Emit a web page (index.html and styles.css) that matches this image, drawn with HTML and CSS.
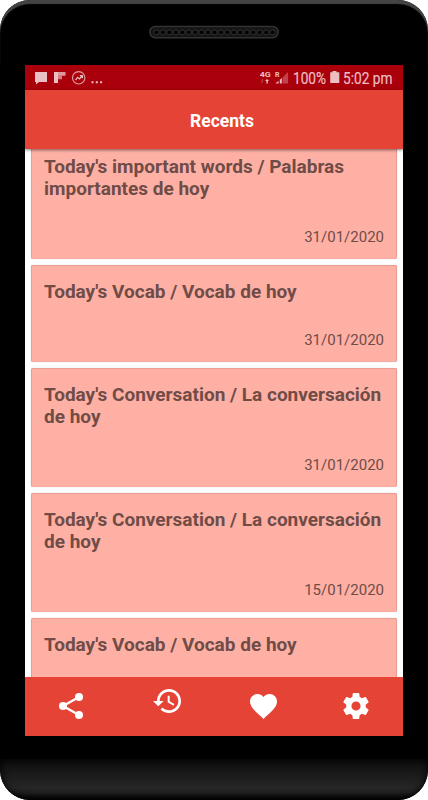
FILE: index.html
```
<!DOCTYPE html>
<html lang="en">
<head>
  <meta charset="UTF-8">
  <title>Recents</title>
  <link rel="stylesheet" href="styles.css">
</head>
<body>
<div class="phone">
  <div class="top">
    <svg class="speaker" width="130" height="14" viewBox="0 0 130 14">
      <defs>
        <pattern id="hole" width="6.45" height="14" patternUnits="userSpaceOnUse" x="4.3">
          <circle cx="3.2" cy="7.4" r="2.6" fill="#020202" stroke="#3c3c3c" stroke-width="0.8"/>
        </pattern>
      </defs>
      <rect x="0.8" y="1.5" width="128.4" height="11.2" rx="5.6" fill="#141414" stroke="#333" stroke-width="1.5"/>
      <rect x="4.3" y="0" width="122.5" height="14" fill="url(#hole)"/>
    </svg>
  </div>

  <div class="screen">
    <div class="status">
      <svg width="80" height="25" viewBox="0 0 80 25" fill="#ecbfc3">
        <path d="M10 7h12v10h-8l-3 2.5V17h-1z"/>
        <path d="M29 7h4v11h-4z"/>
        <path d="M33 7h7.5v3.7H33z" opacity=".8"/>
        <path d="M33 10.7h4v3.6h-4z" opacity=".65"/>
        <circle cx="53.7" cy="12.8" r="6.2" fill="none" stroke="#dd9da1" stroke-width="1.2"/>
        <path d="M50.5 15l2.2-2.6 1.8 1.6 2.5-3M54.8 10.7h2.6v2.5" fill="none" stroke="#ecbfc3" stroke-width="1.2"/>
        <path d="M66.5 16.3h2v2h-2zM70.8 16.3h2v2h-2zM75.1 16.3h2v2h-2z"/>
      </svg>
      <svg width="150" height="25" viewBox="0 0 150 25" fill="#ecbfc3">
        <text class="tiny" x="6.7" y="12" textLength="11" lengthAdjust="spacingAndGlyphs">4G</text>
        <path d="M8.5 17.5h-1l1.3 1V14h1v3.5z" opacity=".4"/>
        <path d="M14 14l2 2h-1.2v2.5h-1.4V16H12z"/>
        <text class="tiny" x="22" y="11.5" textLength="4.5" lengthAdjust="spacingAndGlyphs">R</text>
        <path d="M22.5 18.5l3-2.7v2.7zM26.8 14.8l2-1.8v5.5h-2z"/>
        <path d="M29.5 12.5l5.5-5.5v11.5h-5.5z" opacity=".35"/>
        <text class="clock" x="40" y="18.9" textLength="33" lengthAdjust="spacingAndGlyphs">100%</text>
        <path d="M79.5 6h4v1.2h2.8V18H77.2V7.2h2.3z"/>
        <text class="clock" x="90" y="18.9" textLength="49.5" lengthAdjust="spacingAndGlyphs">5:02 pm</text>
      </svg>
    </div>
    <div class="header">Recents</div>

    <div class="list">
      <div class="card">
        <div class="title">Today's important words / Palabras importantes de hoy</div>
        <div class="date">31/01/2020</div>
      </div>
      <div class="card">
        <div class="title">Today's Vocab / Vocab de hoy</div>
        <div class="date">31/01/2020</div>
      </div>
      <div class="card">
        <div class="title">Today's Conversation / La conversación de hoy</div>
        <div class="date">31/01/2020</div>
      </div>
      <div class="card">
        <div class="title">Today's Conversation / La conversación de hoy</div>
        <div class="date">15/01/2020</div>
      </div>
      <div class="card">
        <div class="title">Today's Vocab / Vocab de hoy</div>
      </div>
    </div>

    <div class="nav">
      <svg class="share" viewBox="0 0 24 26">
        <path d="M20 4L4 13l16 9" fill="none" stroke="#fff" stroke-width="2.4"/>
        <circle cx="20" cy="4" r="4"/><circle cx="4" cy="13" r="4"/><circle cx="20" cy="22" r="4"/>
      </svg>
      <svg class="recent" viewBox="1 3 21 18">
        <path d="M13 3c-4.97 0-9 4.03-9 9H1l3.89 3.89.07.14L9 12H6c0-3.87 3.13-7 7-7s7 3.13 7 7-3.13 7-7 7c-1.93 0-3.68-.79-4.94-2.06l-1.42 1.42C8.27 19.99 10.51 21 13 21c4.97 0 9-4.03 9-9s-4.03-9-9-9zm-1 5v5l4.28 2.54.72-1.21-3.5-2.08V8H12z"/>
      </svg>
      <svg class="heart" viewBox="2 3 20 18.35">
        <path d="M12 21.35l-1.45-1.32C5.4 15.36 2 12.28 2 8.5 2 5.42 4.42 3 7.5 3c1.74 0 3.41.81 4.5 2.09C13.09 3.81 14.76 3 16.5 3 19.58 3 22 5.42 22 8.5c0 3.78-3.4 6.86-8.55 11.54L12 21.35z"/>
      </svg>
      <svg class="gear" viewBox="2 2 20 20">
        <path d="M19.43 12.98c.04-.32.07-.64.07-.98s-.03-.66-.07-.98l2.11-1.65c.19-.15.24-.42.12-.64l-2-3.46c-.12-.22-.39-.3-.61-.22l-2.49 1c-.52-.4-1.08-.73-1.69-.98l-.38-2.65C14.46 2.18 14.25 2 14 2h-4c-.25 0-.46.18-.49.42l-.38 2.65c-.61.25-1.17.59-1.69.98l-2.49-1c-.23-.09-.49 0-.61.22l-2 3.46c-.13.22-.07.49.12.64l2.11 1.65c-.04.32-.07.65-.07.98s.03.66.07.98l-2.11 1.65c-.19.15-.24.42-.12.64l2 3.46c.12.22.39.3.61.22l2.49-1c.52.4 1.08.73 1.69.98l.38 2.65c.03.24.24.42.49.42h4c.25 0 .46-.18.49-.42l.38-2.65c.61-.25 1.17-.59 1.69-.98l2.49 1c.23.09.49 0 .61-.22l2-3.46c.12-.22.07-.49-.12-.64l-2.11-1.65zM12 15.5c-1.93 0-3.5-1.57-3.5-3.5s1.57-3.5 3.5-3.5 3.5 1.57 3.5 3.5-1.57 3.5-3.5 3.5z"/>
      </svg>
    </div>
  </div>

  <div class="chin"></div>
</div>
</body>
</html>
```
FILE: styles.css
```
body {
  margin: 0;
  background: #fff;
  font-family: Roboto, "Liberation Sans", sans-serif;
}

.phone {
  width: 428px;
  height: 800px;
  background: #000;
  border-radius: 30px;
  overflow: hidden;
  display: flex;
  flex-direction: column;
  align-items: center;
}

.top {
  width: 100%;
  height: 65px;
  box-sizing: border-box;
  padding-top: 25px;
  border-radius: 30px 30px 0 0;
  box-shadow: inset 0 4px 1px #444;
}

.speaker {
  display: block;
  margin: 0 auto;
}

.screen {
  width: 378px;
  height: 671px;
  display: flex;
  flex-direction: column;
  background: #fff;
}

.status {
  height: 25px;
  display: flex;
  justify-content: space-between;
  background: #a9000b;
}

.tiny {
  font-size: 8px;
  font-weight: bold;
}

.clock {
  font-size: 17px;
  stroke: #ecbfc3;
  stroke-width: 0.2px;
}

.header {
  height: 59px;
  box-sizing: border-box;
  padding: 1px 0 0 16px;
  line-height: 61px;
  background: #e54335;
  color: #fff;
  font-size: 17.5px;
  font-weight: bold;
  text-align: center;
  box-shadow: 0 1px 3px rgba(0, 0, 0, 0.5);
  z-index: 1;
}

.list {
  height: 528px;
  overflow: hidden;
  display: flex;
  flex-direction: column;
  gap: 6px;
}

.card {
  flex-shrink: 0;
  min-height: 97px;
  margin: 0 6px;
  padding: 15px 12px 12px;
  border: 1px solid #eb9d93;
  border-bottom-color: #f9aba0;
  border-radius: 2px;
  box-sizing: border-box;
  background: #ffb0a5;
  box-shadow: 0 0 1px rgba(0, 0, 0, 0.3);
  color: #704c47;
}

.card:first-child {
  margin-top: -9px;
}

.title {
  font-size: 19px;
  line-height: 22px;
  font-weight: bold;
}

.date {
  margin-top: 29px;
  font-size: 15px;
  line-height: 17px;
  text-align: right;
}

.nav {
  height: 59px;
  display: flex;
  background: #e54335;
}

.nav svg {
  fill: #fff;
}

.share {
  width: 24px;
  height: 26px;
  margin: 16px 0 0 34px;
}

.recent {
  width: 28px;
  height: 24px;
  margin: 12px 0 0 70px;
}

.heart {
  width: 27px;
  height: 25px;
  margin: 17px 0 0 69px;
}

.gear {
  width: 26px;
  height: 26px;
  margin: 16px 0 0 65.5px;
}

.chin {
  width: 100%;
  height: 41px;
  margin-top: 23px;
  border-radius: 0 0 30px 30px;
  background: linear-gradient(#0d0d0d, #262626 70%, #202020 82%, #000);
  box-shadow: inset 0 0 8px #000;
}
```
